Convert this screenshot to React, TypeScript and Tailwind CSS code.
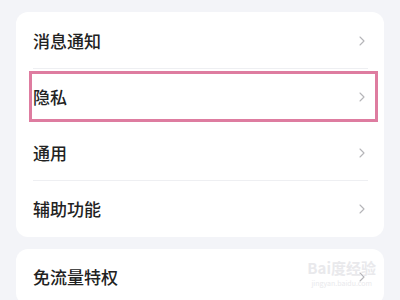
import { ChevronRight } from "lucide-react";

const font = { fontFamily: '"Noto Sans CJK SC", "Noto Sans", sans-serif' };

function Row({ label, divider = true }: { label: string; divider?: boolean }) {
  return (
    <div className="relative flex h-14 items-center justify-between pl-[17px] pr-[14px]">
      <span className="text-[17px] font-medium text-[#222]">{label}</span>
      <ChevronRight className="h-[16px] w-[16px] text-[#b5b5b8]" strokeWidth={1.6} />
      {divider && <div className="absolute bottom-0 left-[17px] right-[16px] h-px bg-[#eeeff2]" />}
    </div>
  );
}

export default function App() {
  return (
    <div className="flex h-[300px] w-[400px] flex-col gap-3 overflow-hidden bg-[#f3f4f8] px-4 pt-3" style={font}>
      <div className="flex flex-col rounded-xl bg-white pt-[1px]">
        <Row label="消息通知" />
        <div className="relative">
          <Row label="隐私" divider={false} />
          <div className="absolute left-[13px] right-[6px] top-[2px] bottom-[3px] border-[3px] border-[#de7ca0]" />
        </div>
        <Row label="通用" />
        <Row label="辅助功能" divider={false} />
      </div>
      <div className="relative flex flex-col rounded-xl bg-white">
        <Row label="免流量特权" divider={false} />
        <div className="absolute right-[8px] top-[10px] flex flex-col items-center gap-[3px] text-[#e9e9ec]">
          <span className="text-[15px] font-bold leading-[17px]">Bai度经验</span>
          <span className="text-[7px] leading-[8px]">jingyan.baidu.com</span>
        </div>
      </div>
    </div>
  );
}
